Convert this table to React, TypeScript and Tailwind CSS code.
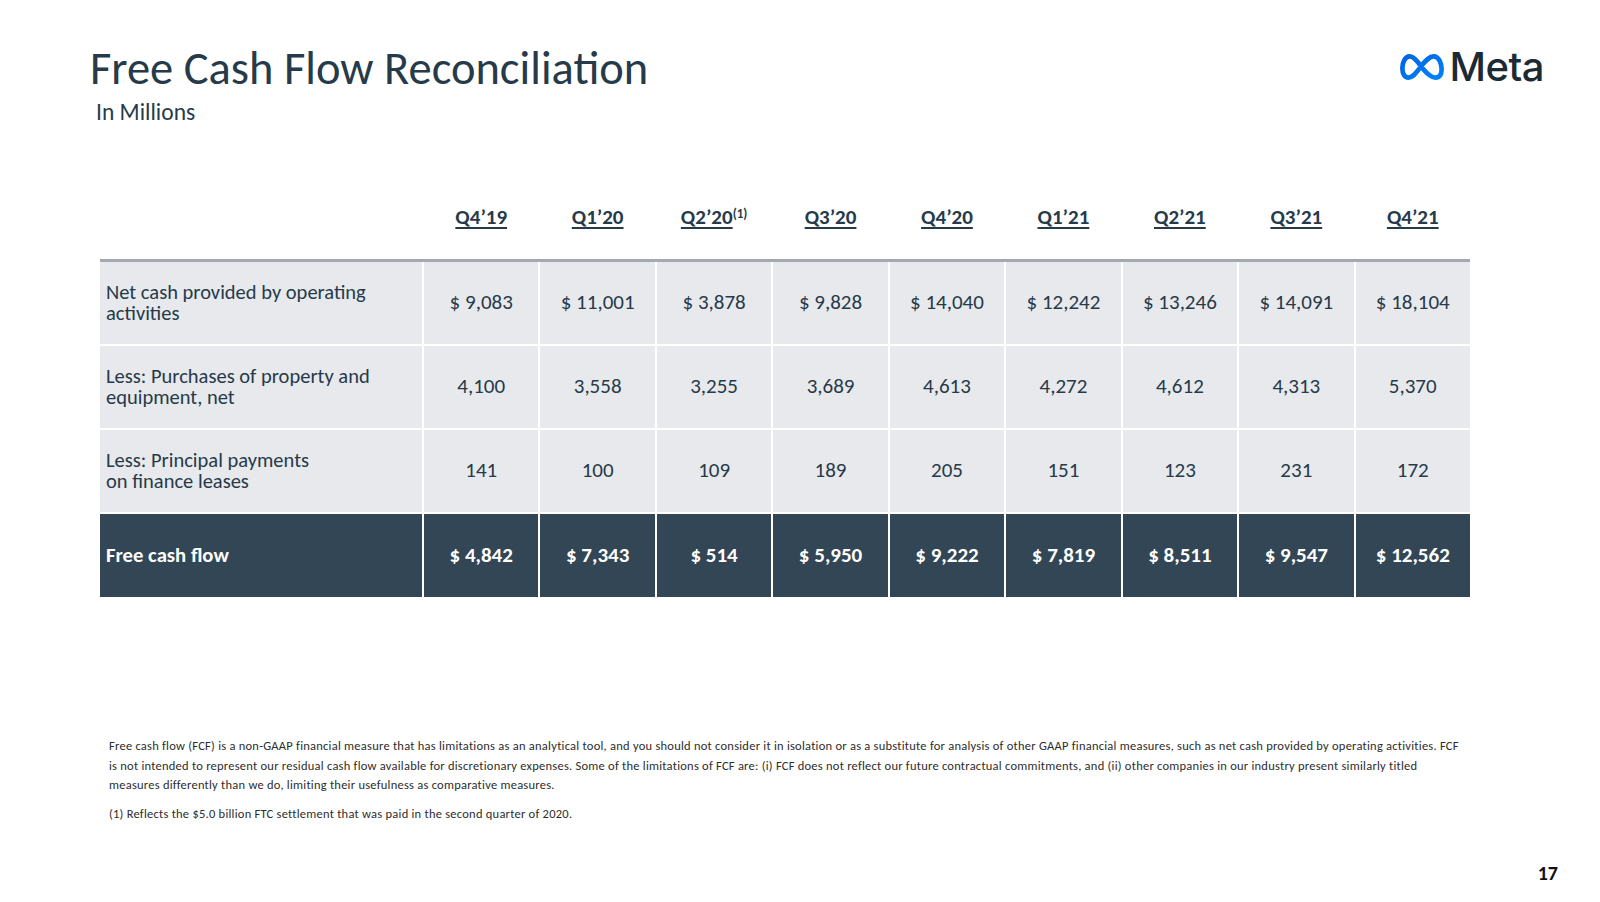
import React from 'react'

const font = { fontFamily: 'Carlito, Calibri, "Open Sans", sans-serif' }

const quarters = ['Q4’19', 'Q1’20', 'Q2’20', 'Q3’20', 'Q4’20', 'Q1’21', 'Q2’21', 'Q3’21', 'Q4’21']

const rows = [
  { label: ['Net cash provided by operating', 'activities'], values: ['$ 9,083', '$ 11,001', '$ 3,878', '$ 9,828', '$ 14,040', '$ 12,242', '$ 13,246', '$ 14,091', '$ 18,104'] },
  { label: ['Less: Purchases of property and', 'equipment, net'], values: ['4,100', '3,558', '3,255', '3,689', '4,613', '4,272', '4,612', '4,313', '5,370'] },
  { label: ['Less: Principal payments', 'on finance leases'], values: ['141', '100', '109', '189', '205', '151', '123', '231', '172'] },
]

const fcf = ['$ 4,842', '$ 7,343', '$ 514', '$ 5,950', '$ 9,222', '$ 7,819', '$ 8,511', '$ 9,547', '$ 12,562']

const MetaLogo = () => (
  <div className="flex items-center gap-[4px]">
    <svg width="46" height="30" viewBox="0 0 41 26" fill="none">
      <defs>
        <linearGradient id="mg" x1="0" y1="0" x2="1" y2="1">
          <stop offset="0" stopColor="#0064e0" />
          <stop offset="1" stopColor="#0082fb" />
        </linearGradient>
      </defs>
      <path
        d="M20 13 C16 7, 13 3.5, 9.5 3.5 C5.5 3.5, 3 9, 3 14 C3 19, 5 22.5, 8.5 22.5 C13 22.5, 16 17, 20 12 C24 7, 27 3.5, 31 3.5 C35.5 3.5, 38 10, 38 15 C38 20, 36 22.5, 32.5 22.5 C28 22.5, 24 18, 20 13 Z"
        stroke="url(#mg)"
        strokeWidth="4.2"
        strokeLinejoin="round"
      />
    </svg>
    <span className="text-[40px] leading-none font-medium text-[#1c2b33] tracking-[-0.5px]" style={{ fontFamily: 'Inter, "Noto Sans", sans-serif' }}>
      Meta
    </span>
  </div>
)

export default function App() {
  return (
    <div className="w-[1600px] h-[902px] bg-white text-[#263a4a] overflow-hidden flex flex-col" style={font}>
      <div className="flex justify-between items-start pl-[90px] pr-[56px] pt-[41px]">
        <div>
          <h1 className="text-[46.5px] leading-[54px] text-[#263a4a]">Free Cash Flow Reconciliation</h1>
          <p className="text-[23.5px] leading-[28px] pl-[6px] mt-[3px]">In Millions</p>
        </div>
        <div className="pt-[6px]">
          <MetaLogo />
        </div>
      </div>

      <div className="ml-[100px] w-[1370px] mt-[59px]">
        <div className="grid grid-cols-[322px_repeat(9,1fr)] gap-x-[2px] h-[74px] items-start pt-[17px]">
          <div />
          {quarters.map((q, i) => (
            <div key={q} className="text-center text-[21px] font-bold">
              <span className="underline underline-offset-[3px] decoration-[1.5px]">{q}</span>
              {i === 2 && <sup className="text-[13px] font-bold">(1)</sup>}
            </div>
          ))}
        </div>
        <div className="h-[3px] bg-[#a3a9b0]" />
        <div className="flex flex-col gap-y-[2px]">
          {rows.map((r) => (
            <div key={r.label[0]} className="grid grid-cols-[322px_repeat(9,1fr)] gap-x-[2px] h-[82px]">
              <div className="bg-[#e8e9ec] flex items-center pl-[6px]">
                <p className="text-[20.5px] leading-[21px]">
                  {r.label[0]}
                  <br />
                  {r.label[1]}
                </p>
              </div>
              {r.values.map((v, i) => (
                <div key={i} className="bg-[#e8e9ec] flex items-center justify-center text-[21px]">
                  {v}
                </div>
              ))}
            </div>
          ))}
          <div className="grid grid-cols-[322px_repeat(9,1fr)] gap-x-[2px] h-[83px] text-white font-bold">
            <div className="bg-[#334655] flex items-center pl-[6px] text-[20.7px]">Free cash flow</div>
            {fcf.map((v, i) => (
              <div key={i} className="bg-[#334655] flex items-center justify-center text-[21px]">
                {v}
              </div>
            ))}
          </div>
        </div>
      </div>

      <div className="ml-[109px] mt-[139px] text-[12.5px] leading-[19.5px] text-[#2d2d2d] tracking-[0.24px]">
        <p className="whitespace-nowrap">
          Free cash flow (FCF) is a non-GAAP financial measure that has limitations as an analytical tool, and you should not consider it in isolation or as a substitute for analysis of other GAAP financial measures, such as net cash provided by operating activities. FCF
          <br />
          is not intended to represent our residual cash flow available for discretionary expenses. Some of the limitations of FCF are: (i) FCF does not reflect our future contractual commitments, and (ii) other companies in our industry present similarly titled
          <br />
          measures differently than we do, limiting their usefulness as comparative measures.
        </p>
        <p className="mt-[9px]">(1) Reflects the $5.0 billion FTC settlement that was paid in the second quarter of 2020.</p>
      </div>

      <div className="flex-1" />
      <div className="flex justify-end pr-[42px] pb-[14px]">
        <span className="text-[20px] font-bold text-[#111]">17</span>
      </div>
    </div>
  )
}
